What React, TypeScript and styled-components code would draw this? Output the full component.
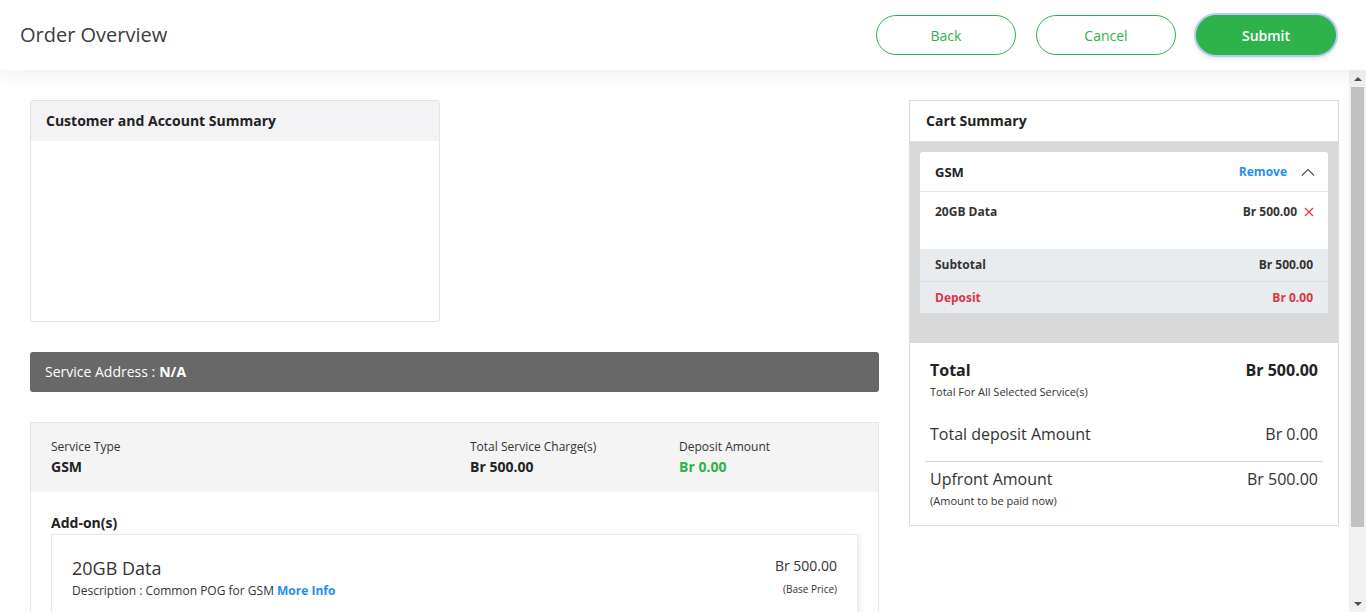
import React from "react";
import styled, { createGlobalStyle, css } from "styled-components";

const GlobalStyle = createGlobalStyle`
  html, body { margin: 0; padding: 0; height: 100%; }
  body {
    font-family: "Open Sans", "Liberation Sans", sans-serif;
    color: #333;
    background: #fff;
    overflow: hidden;
  }
  * { box-sizing: border-box; }
  #root { height: 100%; }
`;

const Page = styled.div`
  height: 100vh;
  display: flex;
  flex-direction: column;
`;

const Header = styled.header`
  flex: 0 0 70px;
  display: flex;
  align-items: center;
  justify-content: space-between;
  padding: 0 30px 2px 20px;
  background: #fff;
  box-shadow: 0 4px 26px rgba(0, 0, 0, 0.07);
  position: relative;
  z-index: 2;
`;

const Title = styled.h1`
  margin: 0;
  font-size: 20px;
  font-weight: 400;
  color: #3c3c3c;
`;

const ButtonGroup = styled.div`
  display: flex;
  gap: 20px;
  margin-top: 2px;
`;

const ActionButton = styled.button<{ $primary?: boolean }>`
  width: 140px;
  height: 40px;
  border-radius: 20px;
  font-family: inherit;
  font-size: 14px;
  cursor: pointer;
  border: 1px solid #2db34a;
  ${(p) =>
    p.$primary
      ? css`
          background: #2db34a;
          color: #fff;
          font-weight: 600;
          box-shadow: 0 0 0 2px rgba(170, 195, 245, 0.85),
            0 2px 6px rgba(0, 0, 0, 0.15);
        `
      : css`
          background: #fff;
          color: #2db34a;
          font-weight: 400;
        `}
`;

const Body = styled.div`
  flex: 1;
  min-height: 0;
  display: flex;
`;

const ScrollArea = styled.main`
  flex: 1;
  min-width: 0;
  overflow-y: auto;
  scrollbar-width: none;
`;

const ScrollTrack = styled.div`
  flex: 0 0 17px;
  display: flex;
  flex-direction: column;
  background: #f1f1f1;
`;

const ScrollArrow = styled.div<{ $down?: boolean }>`
  flex: 0 0 17px;
  display: flex;
  align-items: center;
  justify-content: center;

  &::before {
    content: "";
    width: 0;
    height: 0;
    border-left: 4px solid transparent;
    border-right: 4px solid transparent;
    ${(p) =>
      p.$down
        ? css`border-top: 4px solid #505050;`
        : css`border-bottom: 4px solid #505050;`}
  }
`;

const ScrollRail = styled.div`
  flex: 1;
  padding: 0 2px;
`;

const ScrollThumb = styled.div`
  height: 440px;
  background: #c1c1c1;
`;

const Content = styled.div`
  display: grid;
  grid-template-columns: 849px 430px;
  column-gap: 30px;
  align-items: start;
  padding: 30px 0 52px 30px;
`;

const Column = styled.div`
  display: flex;
  flex-direction: column;
  gap: 30px;
`;

/* ---------- Left side ---------- */

const SummaryCard = styled.section`
  width: 410px;
  border: 1px solid #e3e3e3;
  border-radius: 3px;
  overflow: hidden;
  background: #fff;
`;

const CardHeader = styled.div<{ $bg?: string; $pad?: number }>`
  height: 40px;
  display: flex;
  align-items: center;
  padding: 0 ${(p) => p.$pad ?? 15}px 2px;
  background: ${(p) => p.$bg ?? "#f3f3f5"};
  font-size: 14px;
  font-weight: 700;
  color: #222;
`;

const CardBody = styled.div`
  min-height: 180px;
`;

const AddressBar = styled.div`
  height: 40px;
  display: flex;
  align-items: center;
  padding: 0 15px 2px;
  background: #686868;
  border-radius: 3px;
  color: #fff;
  font-size: 14px;

  b { font-weight: 700; margin-left: 4px; }
`;

const ServiceCard = styled.section`
  border: 1px solid #e6e6e6;
  background: #fff;
  padding-bottom: 20px;
`;

const ServiceSummary = styled.div`
  display: grid;
  grid-template-columns: 419px 209px 1fr;
  padding: 15px 20px 14px;
  background: #f4f4f4;
`;

const Field = styled.div`
  display: flex;
  flex-direction: column;
`;

const FieldLabel = styled.span`
  font-size: 12px;
  line-height: 18px;
  color: #333;
`;

const FieldValue = styled.span<{ $color?: string }>`
  font-size: 14px;
  line-height: 22px;
  font-weight: 700;
  color: ${(p) => p.$color ?? "#222"};
`;

const AddonSection = styled.div`
  padding: 20px 20px 0;
`;

const SectionTitle = styled.h3`
  margin: 0;
  font-size: 14px;
  line-height: 22px;
  font-weight: 700;
  color: #222;
`;

const AddonCard = styled.div`
  display: flex;
  justify-content: space-between;
  padding: 20px;
  border: 1px solid #e8e8e8;
  border-radius: 2px;
  box-shadow: 2px 1px 5px rgba(0, 0, 0, 0.07);
`;

const AddonName = styled.div`
  font-size: 18px;
  line-height: 26px;
  color: #333;
`;

const AddonDesc = styled.div`
  font-size: 12px;
  line-height: 20px;
  color: #333;
`;

const Link = styled.a<{ $size?: number }>`
  color: #1e8ff0;
  font-weight: 700;
  font-size: ${(p) => p.$size ?? 12}px;
  text-decoration: none;
  cursor: pointer;
`;

const PriceCol = styled.div`
  display: flex;
  flex-direction: column;
  align-items: flex-end;
`;

const Price = styled.div`
  font-size: 14px;
  line-height: 22px;
  color: #333;
`;

const PriceNote = styled.div`
  margin-top: 4px;
  font-size: 10px;
  line-height: 16px;
  color: #333;
`;

/* ---------- Right side: cart ---------- */

const CartCard = styled.aside`
  border: 1px solid #dcdcdc;
  background: #fff;
`;

const CartTray = styled.div`
  border-top: 1px solid #e2e2e2;
  background: #d9d9d9;
  padding: 10px 10px 30px;
`;

const ServiceBox = styled.div`
  background: #fff;
  border-radius: 3px 3px 0 0;
  overflow: hidden;
`;

const ServiceHead = styled.div`
  height: 40px;
  display: flex;
  align-items: center;
  justify-content: space-between;
  padding: 0 13px 0 15px;
  border-bottom: 1px solid #e6e6e6;
`;

const ServiceName = styled.span`
  font-size: 13px;
  font-weight: 700;
  color: #222;
`;

const HeadActions = styled.div`
  display: flex;
  align-items: center;
  gap: 14px;
`;

const ItemRow = styled.div`
  min-height: 57px;
  display: flex;
  align-items: flex-start;
  justify-content: space-between;
  padding: 12px 14px 0 15px;
`;

const SmallBold = styled.span<{ $color?: string }>`
  font-size: 12px;
  line-height: 16px;
  font-weight: 700;
  color: ${(p) => p.$color ?? "#333"};
`;

const ItemPrice = styled.div`
  display: flex;
  align-items: center;
  gap: 7px;
`;

const TotalsRow = styled.div`
  height: 32px;
  display: flex;
  align-items: center;
  justify-content: space-between;
  padding: 0 15px;
  background: #e9ecef;

  & + & { border-top: 1px solid #dadde1; }
`;

const GrandTotals = styled.div`
  padding: 16px 20px 17px;
`;

const Line = styled.div<{ $mt?: number }>`
  display: flex;
  justify-content: space-between;
  align-items: center;
  margin-top: ${(p) => p.$mt ?? 0}px;
`;

const BigText = styled.span<{ $bold?: boolean }>`
  font-size: 16px;
  line-height: 22px;
  font-weight: ${(p) => (p.$bold ? 700 : 400)};
  color: ${(p) => (p.$bold ? "#222" : "#333")};
`;

const Tiny = styled.div<{ $mt?: number }>`
  font-size: 11px;
  line-height: 14px;
  color: #333;
  margin-top: ${(p) => p.$mt ?? 0}px;
`;

const Divider = styled.hr`
  margin: 16px -5px 0;
  border: 0;
  border-top: 1px solid #d6d6d6;
`;

const ChevronUp = () => (
  <svg width="14" height="8" viewBox="0 0 14 8" fill="none">
    <polyline points="1,7.5 7,1.5 13,7.5" stroke="#555" strokeWidth="1.2" />
  </svg>
);

const CloseX = () => (
  <svg width="10" height="10" viewBox="0 0 10 10" fill="none">
    <path d="M1 1 L9 9 M9 1 L1 9" stroke="#e5333f" strokeWidth="1.3" />
  </svg>
);

export default function App() {
  return (
    <Page>
      <GlobalStyle />
      <Header>
        <Title>Order Overview</Title>
        <ButtonGroup>
          <ActionButton>Back</ActionButton>
          <ActionButton>Cancel</ActionButton>
          <ActionButton $primary>Submit</ActionButton>
        </ButtonGroup>
      </Header>
      <Body>
        <ScrollArea>
          <Content>
            <Column>
              <SummaryCard>
                <CardHeader>Customer and Account Summary</CardHeader>
                <CardBody />
              </SummaryCard>

              <AddressBar>
                Service Address :<b>N/A</b>
              </AddressBar>

              <ServiceCard>
                <ServiceSummary>
                  <Field>
                    <FieldLabel>Service Type</FieldLabel>
                    <FieldValue>GSM</FieldValue>
                  </Field>
                  <Field>
                    <FieldLabel>Total Service Charge(s)</FieldLabel>
                    <FieldValue>Br 500.00</FieldValue>
                  </Field>
                  <Field>
                    <FieldLabel>Deposit Amount</FieldLabel>
                    <FieldValue $color="#2db34a">Br 0.00</FieldValue>
                  </Field>
                </ServiceSummary>
                <AddonSection>
                  <SectionTitle>Add-on(s)</SectionTitle>
                  <AddonCard>
                    <div>
                      <AddonName>20GB Data</AddonName>
                      <AddonDesc>
                        Description : Common POG for GSM <Link>More Info</Link>
                      </AddonDesc>
                    </div>
                    <PriceCol>
                      <Price>Br 500.00</Price>
                      <PriceNote>(Base Price)</PriceNote>
                    </PriceCol>
                  </AddonCard>
                </AddonSection>
              </ServiceCard>
            </Column>

            <CartCard>
              <CardHeader $bg="#fff" $pad={16}>Cart Summary</CardHeader>
              <CartTray>
                <ServiceBox>
                  <ServiceHead>
                    <ServiceName>GSM</ServiceName>
                    <HeadActions>
                      <Link>Remove</Link>
                      <ChevronUp />
                    </HeadActions>
                  </ServiceHead>
                  <ItemRow>
                    <SmallBold>20GB Data</SmallBold>
                    <ItemPrice>
                      <SmallBold>Br 500.00</SmallBold>
                      <CloseX />
                    </ItemPrice>
                  </ItemRow>
                  <TotalsRow>
                    <SmallBold>Subtotal</SmallBold>
                    <SmallBold>Br 500.00</SmallBold>
                  </TotalsRow>
                  <TotalsRow>
                    <SmallBold $color="#dc3545">Deposit</SmallBold>
                    <SmallBold $color="#dc3545">Br 0.00</SmallBold>
                  </TotalsRow>
                </ServiceBox>
              </CartTray>
              <GrandTotals>
                <Line>
                  <BigText $bold>Total</BigText>
                  <BigText $bold>Br 500.00</BigText>
                </Line>
                <Tiny $mt={4}>Total For All Selected Service(s)</Tiny>
                <Line $mt={24}>
                  <BigText>Total deposit Amount</BigText>
                  <BigText>Br 0.00</BigText>
                </Line>
                <Divider />
                <Line $mt={6}>
                  <BigText>Upfront Amount</BigText>
                  <BigText>Br 500.00</BigText>
                </Line>
                <Tiny $mt={4}>(Amount to be paid now)</Tiny>
              </GrandTotals>
            </CartCard>
          </Content>
        </ScrollArea>
        <ScrollTrack aria-hidden>
          <ScrollArrow />
          <ScrollRail>
            <ScrollThumb />
          </ScrollRail>
          <ScrollArrow $down />
        </ScrollTrack>
      </Body>
    </Page>
  );
}
